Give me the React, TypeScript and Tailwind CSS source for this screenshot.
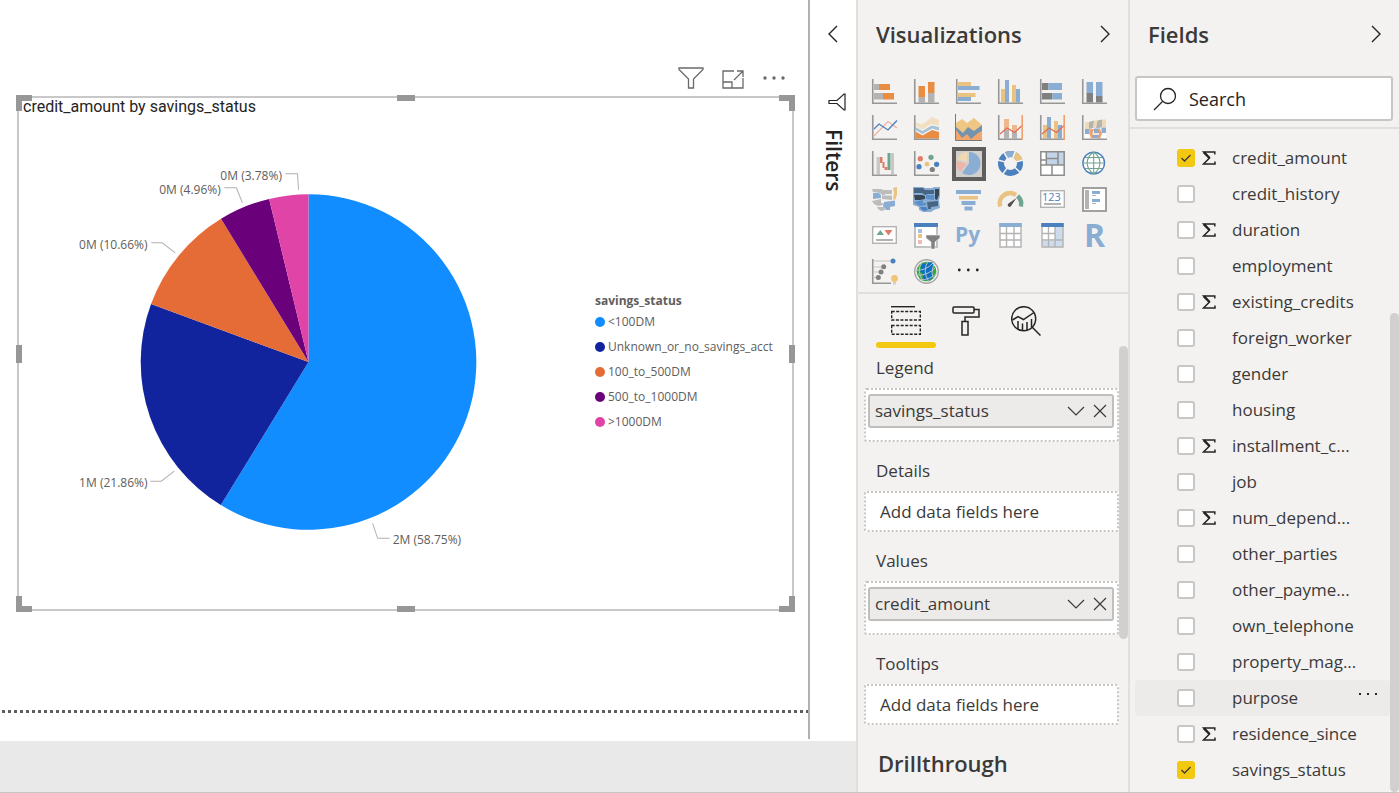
import { useState } from "react";
import type { ReactNode } from "react";
import clsx from "clsx";

const slices = [
  { name: "<100DM", value: 58.75, color: "#118dff", label: "2M (58.75%)", x: 393, y: 544, line: "M373 523L378 538H390" },
  { name: "Unknown_or_no_savings_acct", value: 21.86, color: "#12239e", label: "1M (21.86%)", x: 80, y: 487, line: "M151 481H162L175 471" },
  { name: "100_to_500DM", value: 10.66, color: "#e66c37", label: "0M (10.66%)", x: 80, y: 249, line: "M152 243H163L176 253" },
  { name: "500_to_1000DM", value: 4.96, color: "#6b007b", label: "0M (4.96%)", x: 160, y: 194, line: "M225 188H237L243 203" },
  { name: ">1000DM", value: 3.78, color: "#e044a7", label: "0M (3.78%)", x: 221, y: 180, line: "M286 174H298L299 190" },
];

function slicePath(cx: number, cy: number, r: number, start: number, end: number) {
  const point = (share: number) => {
    const a = (share / 100) * Math.PI * 2 - Math.PI / 2;
    return `${cx + r * Math.cos(a)} ${cy + r * Math.sin(a)}`;
  };
  return `M${cx} ${cy}L${point(start)}A${r} ${r} 0 ${end - start > 50 ? 1 : 0} 1 ${point(end)}Z`;
}

function Pie() {
  let sum = 0;
  return (
    <svg viewBox="20 116 560 492" className="min-w-0 flex-1 self-stretch" role="img" aria-label="Pie chart">
      {slices.map((s) => {
        const start = sum;
        sum += s.value;
        return (
          <g key={s.name}>
            <path d={slicePath(309, 362, 167.5, start, Math.min(sum, 100))} fill={s.color} />
            <path d={s.line} fill="none" stroke="#b3b0ad" />
            <text x={s.x} y={s.y} fontSize="12" fill="#605e5c">
              {s.label}
            </text>
          </g>
        );
      })}
    </svg>
  );
}

const BLUE = "#8aadd3";
const DEEP = "#4a80bd";
const ORANGE = "#e88d42";
const YELLOW = "#eac282";
const GREY = "#b3b3b3";
const DARK = "#808080";
const RED = "#dd7c68";
const GREEN = "#6fa58f";

const Axes = () => <path d="M.75 0V24.25H25" fill="none" stroke="#979797" strokeWidth="1.6" />;

// x, y, width, height, color
type Bar = [number, number, number, number, string];

const Bars = ({ items }: { items: Bar[] }) => (
  <>
    {items.map(([x, y, w, h, c]) => (
      <rect key={`${x}-${y}`} x={x} y={y} width={w} height={h} fill={c} />
    ))}
  </>
);

const visuals: { name: string; icon: ReactNode }[] = [
  {
    name: "Stacked bar chart",
    icon: <><Bars items={[[2, 5, 5, 6, GREY], [7, 5, 11, 6, ORANGE], [2, 14, 9, 6.5, GREY], [11, 14, 11, 6.5, ORANGE]]} /><Axes /></>,
  },
  {
    name: "Stacked column chart",
    icon: <><Bars items={[[4.5, 7, 6.5, 11, ORANGE], [4.5, 18, 6.5, 5.5, GREY], [14, 3, 6.5, 11, ORANGE], [14, 14, 6.5, 9.5, GREY]]} /><Axes /></>,
  },
  {
    name: "Clustered bar chart",
    icon: <><Bars items={[[2, 3, 13, 4, YELLOW], [2, 7, 21.5, 4, BLUE], [2, 14, 17.5, 4, YELLOW], [2, 18, 13, 4, BLUE]]} /><Axes /></>,
  },
  {
    name: "Clustered column chart",
    icon: <><Bars items={[[3, 10, 4, 13.5, YELLOW], [7, 1, 4, 22.5, BLUE], [14, 6, 4, 17.5, YELLOW], [18, 10, 4, 13.5, BLUE]]} /><Axes /></>,
  },
  {
    name: "100% stacked bar chart",
    icon: <><Bars items={[[2, 4, 6.5, 7, DARK], [8.5, 4, 13.5, 7, BLUE], [2, 14, 10.5, 6.5, DARK], [12.5, 14, 9.5, 6.5, BLUE]]} /><Axes /></>,
  },
  {
    name: "100% stacked column chart",
    icon: <><Bars items={[[4.5, 3, 6.5, 11, BLUE], [4.5, 14, 6.5, 9.5, DARK], [14, 3, 6.5, 14, BLUE], [14, 17, 6.5, 6.5, DARK]]} /><Axes /></>,
  },
  {
    name: "Line chart",
    icon: (
      <>
        <path d="M2 21L16 6.5L25 13" fill="none" stroke="#efb3a6" strokeWidth="1.3" />
        <path d="M2 14L7 9L16 15L25 5.5" fill="none" stroke={DEEP} strokeWidth="1.3" />
        <Axes />
      </>
    ),
  },
  {
    name: "Area chart",
    icon: (
      <>
        <path d="M1.5 7L8 9.5L18 2L25 5V10.5L17 9L8.5 14.5L1.5 10.5Z" fill="#f1dfc0" />
        <path d="M1.5 12L8.5 16L17.5 10.5L25 12V15.5L18 13.5L8.5 19L1.5 15Z" fill="#a8c3d6" />
        <path d="M1.5 16.5L8.5 20.5L18 15L25 17V23.5H1.5Z" fill={ORANGE} />
        <Axes />
      </>
    ),
  },
  {
    name: "Stacked area chart",
    icon: (
      <>
        <path d="M0 8L6 4L11 8L18 3L26 10V18H0Z" fill="#efc684" />
        <path d="M0 12L7 18L12 12L18 16L26 10V25H0Z" fill="#7593ad" />
        <path d="M0 15L6 23L11 19L15 24L22 18L26 16V25.5H0Z" fill="#f4a66a" />
        <path d="M-.5 -1V25.5H26" fill="none" stroke="#797979" />
      </>
    ),
  },
  {
    name: "Line and stacked column chart",
    icon: (
      <>
        <Bars items={[[6, 4, 5, 11, "#f0b68c"], [6, 15, 5, 8.5, GREY], [14, 10, 5, 7, "#f0b68c"], [14, 17, 5, 6.5, GREY]]} />
        <path d="M2 19L9 13L16.5 17.5L24 10.5" fill="none" stroke="#e2694f" strokeWidth="1.2" />
        <Axes />
        <path d="M24.2 0V25" stroke="#f0a06c" strokeWidth="1.6" />
      </>
    ),
  },
  {
    name: "Line and clustered column chart",
    icon: (
      <>
        <Bars items={[[3, 10, 4, 13.5, YELLOW], [7, 2, 4, 21.5, BLUE], [14, 6, 4, 17.5, YELLOW], [18, 10, 4, 13.5, BLUE]]} />
        <path d="M2 19L9 13L16.5 17.5L24 10.5" fill="none" stroke="#e2694f" strokeWidth="1.2" />
        <Axes />
        <path d="M24.2 0V25" stroke="#f0a06c" strokeWidth="1.6" />
      </>
    ),
  },
  {
    name: "Ribbon chart",
    icon: (
      <>
        <path d="M3 7H7V14H3ZM12 5.5H15.500L14 13H11ZM20 4.500H24V12H20Z" fill="#f0dab4" />
        <path d="M7 7L12 5.500L11 13L7 14ZM15.500 5.500L20 4.500V12L17 13H14Z" fill={GREY} />
        <path d="M3 14H7.500V19H3ZM12 13.500H18V18H12ZM19.500 12.500H24V18H19.500ZM9 20H18V23H9Z" fill={BLUE} />
        <path d="M3 19H7.500V23.500H3ZM19.500 18H24V23.500H19.500Z" fill="#fff" />
        <path d="M8 14H12L10.500 18L11 23H9L7.500 19ZM16 14H18L20 19L18 23.500H16L17 19Z" fill="#f0a06c" />
        <path d="M11 18H16.500L16 20H11Z" fill="#f6e4d2" />
        <Axes />
      </>
    ),
  },
  {
    name: "Waterfall chart",
    icon: (
      <>
        <Bars items={[[4.5, 6, 3.5, 17.5, "#c8c8c8"], [8, 6, 2.5, 6, RED], [10.5, 11, 2, 6, RED], [12.5, 16, 3, 3, RED], [15.5, 2, 3, 17, GREEN], [19, 2, 3, 21.5, "#c8c8c8"]]} />
        <Axes />
      </>
    ),
  },
  {
    name: "Scatter chart",
    icon: (
      <>
        <circle cx="6.3" cy="7.7" r="2.6" fill={RED} />
        <circle cx="17" cy="6.3" r="2.6" fill={GREEN} />
        <circle cx="13" cy="13.2" r="2.4" fill={YELLOW} />
        <circle cx="5" cy="15.7" r="2.6" fill={DEEP} />
        <circle cx="22.6" cy="13.3" r="2.6" fill={DEEP} />
        <circle cx="18.3" cy="18.5" r="2.6" fill={DARK} />
        <Axes />
      </>
    ),
  },
  {
    name: "Pie chart",
    icon: (
      <>
        <path d={slicePath(13, 12.5, 11.5, 0, 62)} fill={BLUE} />
        <path d={slicePath(11.5, 12.5, 11, 62, 79)} fill="#edb4a7" />
        <path d={slicePath(11.5, 11.5, 10.5, 79, 100)} fill="#f0d9b0" />
        <path d="M12 0V12L5.5 22M12 12L1 9" fill="none" stroke="#d2d2d2" strokeWidth="1.3" />
      </>
    ),
  },
  {
    name: "Donut chart",
    icon: (
      <g fill="none" strokeWidth="6">
        <circle cx="12.5" cy="12.5" r="9.5" stroke={DEEP} />
        <path d="M7.5 4.4A9.5 9.5 0 0 1 15.8 3.6" stroke={BLUE} />
        <path d="M15.8 3.6A9.5 9.5 0 0 1 21.7 10" stroke={YELLOW} />
        <path
          d="M12.5 12.5L5 0M12.5 12.5L17.5 0M12.5 12.5L25 9M12.5 12.5L23 22M12.5 12.5L4 24M12.5 12.5L0 9"
          stroke="#f3f2f1"
          strokeWidth="1.5"
        />
      </g>
    ),
  },
  {
    name: "Treemap",
    icon: (
      <>
        <rect x=".8" y=".8" width="23.4" height="23.4" fill="#fff" />
        <path d="M6.5 1H24V14H6.5Z" fill="#c3d4e8" />
        <path d="M.8 .8H24.2V24.2H.8ZM6.3 1V14M1 14H24M1 9H6M6 7.5H18M18 1V14M12 14V24" fill="none" stroke="#8c8c8c" strokeWidth="1.5" />
      </>
    ),
  },
  {
    name: "Map",
    icon: (
      <g fill="none" strokeWidth="1.1">
        <circle cx="11.7" cy="12" r="10.8" fill="#fff" stroke={DEEP} strokeWidth="1.4" />
        <path d="M11.7 1V23M1 12H22M3 6.5H20M3 17.5H20M11.7 1C3 7 3 17 11.7 23M11.7 1C20 7 20 17 11.7 23" stroke={GREEN} />
      </g>
    ),
  },
  {
    name: "Filled map",
    icon: (
      <>
        <path d="M0 2H9L11 3H20V7H14L11 8.500L8 6L1 5Z" fill="#bcbcbc" />
        <path d="M1 6H7L9 8V11L1 12Z" fill={BLUE} />
        <path d="M10 8.500H20V13L10 12ZM0 14L9 12V16H11V18L6 19L2 17Z" fill="#bcbcbc" />
        <path d="M21 1L25 0V8L23 13L21 12L22 6Z" fill={YELLOW} />
        <path d="M12 15L23 13.500V19L18 20V23H14L11 19Z" fill={BLUE} />
        <path d="M5 20H12L13 23L9 24L6 22Z" fill="#bcbcbc" />
      </>
    ),
  },
  {
    name: "Shape map",
    icon: (
      <>
        <path d="M-1 0H9L11 1H18L20 0H26V8L25 14L26 21L20 23L17 25H9L5 23V20L-1 18Z" fill={BLUE} />
        <path d="M0 1H9L11 3H20V7H14L11 8L8 6H0Z" fill="#466684" />
        <path d="M0 8H8L11 9V12L6 13H1ZM21 2H25V8L23 13L21 12Z" fill="#374654" />
        <path d="M12 8H20V13L12 12ZM0 15L9 13V16H12V18L6 19L2 17Z" fill="#5b8fc9" />
        <path d="M13 15L24 14V19L17 20V22H14Z" fill="#466684" />
        <path d="M6 20H12L14 23L10 24L7 22Z" fill="#4b80bc" />
      </>
    ),
  },
  {
    name: "Funnel",
    icon: <Bars items={[[0, 3, 25, 4, BLUE], [3, 9, 19, 3.5, YELLOW], [5.5, 14, 14, 4, BLUE], [8.5, 19.5, 8, 4, BLUE]]} />,
  },
  {
    name: "Gauge",
    icon: (
      <>
        <path d="M2.2 19.5A10.3 10.3 0 0 1 18 8" fill="none" stroke={YELLOW} strokeWidth="4.5" />
        <path d="M19.5 9A10.3 10.3 0 0 1 22.8 19.5" fill="none" stroke={GREEN} strokeWidth="4.5" />
        <path d="M18.500 11L13 19A1.800 1.800 0 1 1 10.500 16.500Z" fill="#505050" />
      </>
    ),
  },
  {
    name: "Card",
    icon: (
      <>
        <rect x=".7" y="3.7" width="23.6" height="16.6" fill="#fff" stroke={GREY} strokeWidth="1.4" />
        <text x="2" y="14" fontSize="11" fill={DEEP}>123</text>
        <path d="M4 17H21" stroke={DARK} strokeWidth="1.2" />
      </>
    ),
  },
  {
    name: "Multi-row card",
    icon: (
      <>
        <rect x="1" y="1" width="23" height="23" fill="#fff" stroke="#979797" strokeWidth="1.8" />
        <Bars items={[[3, 3, 4, 19, GREY], [10, 4, 8, 3, BLUE], [10, 8, 4, 1, GREY], [10, 12, 8, 3, BLUE], [10, 16, 4, 1, GREY]]} />
      </>
    ),
  },
  {
    name: "KPI",
    icon: (
      <>
        <rect x=".7" y="3.7" width="23.6" height="16.6" fill="#fff" stroke={GREY} strokeWidth="1.4" />
        <path d="M4.5 12L8.3 7L12 12Z" fill={GREEN} />
        <path d="M12.5 7H20.5L16.5 12.5Z" fill={RED} />
        <path d="M4 17H21" stroke={DARK} strokeWidth="1.2" />
      </>
    ),
  },
  {
    name: "Slicer",
    icon: (
      <>
        <path d="M1 1H23V24H1Z" fill="#fff" stroke={GREY} strokeWidth="1.6" />
        <Bars items={[[0, 0, 24, 4, DEEP], [4, 6, 4, 4, "#a9bfdb"], [4, 11, 4, 4, YELLOW], [4, 17, 4, 4, "#edbdb1"]]} />
        <path d="M12 12H26V15L21 19V26H17V19L12 15Z" fill={DARK} stroke="#f3f2f1" strokeWidth=".6" />
      </>
    ),
  },
  {
    name: "Python visual",
    icon: <text x="-1" y="19" fontSize="21" fontWeight="700" fill={BLUE}>Py</text>,
  },
  {
    name: "Table",
    icon: (
      <>
        <path d="M2 1H23V24H2Z" fill="#fff" />
        <path d="M2 1H23V24H2ZM8.5 4V24M16 4V24M2 10.5H23M2 17H23" fill="none" stroke={GREY} strokeWidth="1.4" />
        <rect x="1.3" width="22.4" height="4" fill={BLUE} />
      </>
    ),
  },
  {
    name: "Matrix",
    icon: (
      <>
        <path d="M2 1H23V24H2Z" fill="#fff" />
        <path d="M15 4H23V24H2V18H15Z" fill="#cddcec" />
        <path d="M2 1H23V24H2ZM8.5 4V24M15 4V24M2 10.5H15M2 17H23" fill="none" stroke={GREY} strokeWidth="1.4" />
        <rect x="1.3" width="22.4" height="4" fill={DEEP} />
      </>
    ),
  },
  {
    name: "R script visual",
    icon: <text x="2" y="24" fontSize="32" fontWeight="700" fill={BLUE}>R</text>,
  },
  {
    name: "Key influencers",
    icon: (
      <>
        <path d="M2 2H20M2 8H11M2 13H8M2 18.5H6" stroke="#c4c4c4" />
        <circle cx="21" cy="2" r="2.5" fill={DEEP} />
        <circle cx="11.7" cy="7.7" r="2.5" fill={DARK} />
        <circle cx="9" cy="13" r="2.5" fill={DARK} />
        <circle cx="6.3" cy="18.5" r="2.5" fill={DARK} />
        <path d="M.75 0V24.25H19" fill="none" stroke="#979797" strokeWidth="1.6" />
        <circle cx="22.5" cy="19.5" r="3.4" fill="#efc574" />
        <path d="M21 23H24V25.5H21Z" fill="#d4d0c8" />
      </>
    ),
  },
  {
    name: "ArcGIS map",
    icon: (
      <g fill="none" strokeWidth="1">
        <circle cx="12.5" cy="12.5" r="11.8" fill="#f3f2f1" stroke="#a5a5a5" strokeWidth="1.4" />
        <circle cx="12.5" cy="12.5" r="9.8" fill="#35a647" />
        <path d="M8 5L18 3L20 7L18 13L20 18L15 21L8 21L10 16L6 12Z" fill="#0b6fc4" />
        <path d="M2 11Q12 12 19 4M2 16Q14 17 22 8M5 21Q17 21 24 13M8 3Q2 12 9 22M14 2Q8 12 15 23M20 5Q16 14 20 20" stroke="#b9c4c4" />
      </g>
    ),
  },
  {
    name: "More visuals",
    icon: (
      <g fill="#252423">
        <circle cx="3.3" cy="11" r="1.4" />
        <circle cx="12.3" cy="11" r="1.4" />
        <circle cx="21.3" cy="11" r="1.4" />
      </g>
    ),
  },
];

type Field = { name: string; sum?: boolean; checked?: boolean };

const fields: Field[] = [
  { name: "credit_amount", sum: true, checked: true },
  { name: "credit_history" },
  { name: "duration", sum: true },
  { name: "employment" },
  { name: "existing_credits", sum: true },
  { name: "foreign_worker" },
  { name: "gender" },
  { name: "housing" },
  { name: "installment_c...", sum: true },
  { name: "job" },
  { name: "num_depend...", sum: true },
  { name: "other_parties" },
  { name: "other_payme..." },
  { name: "own_telephone" },
  { name: "property_mag..." },
  { name: "purpose" },
  { name: "residence_since", sum: true },
  { name: "savings_status", checked: true },
];

const wells = [
  { title: "Legend", field: "savings_status" },
  { title: "Details" },
  { title: "Values", field: "credit_amount" },
  { title: "Tooltips" },
];

function Chevron({ left }: { left?: boolean }) {
  return (
    <svg viewBox="0 0 10 18" className="h-[18px] w-[10px]" fill="none" stroke="#252423" strokeWidth="1.4">
      <path d={left ? "M9 1L1 9L9 17" : "M1 1L9 9L1 17"} />
    </svg>
  );
}

function Dots() {
  return (
    <svg viewBox="0 0 24 6" className="h-[6px] w-6" fill="currentColor">
      <circle cx="3" cy="3" r="1.7" />
      <circle cx="12" cy="3" r="1.7" />
      <circle cx="21" cy="3" r="1.7" />
    </svg>
  );
}

const HANDLES = [
  "-left-[3px] -top-[3px] size-4 border-l-[6px] border-t-[6px]",
  "-right-[3px] -top-[3px] size-4 border-r-[6px] border-t-[6px]",
  "-left-[3px] -bottom-[3px] size-4 border-l-[6px] border-b-[6px]",
  "-right-[3px] -bottom-[3px] size-4 border-r-[6px] border-b-[6px]",
  "left-1/2 -top-[3px] h-[6px] w-[18px] -translate-x-1/2 bg-[#979797]",
  "left-1/2 -bottom-[3px] h-[6px] w-[18px] -translate-x-1/2 bg-[#979797]",
  "top-1/2 -left-[3px] h-[18px] w-[6px] -translate-y-1/2 bg-[#979797]",
  "top-1/2 -right-[3px] h-[18px] w-[6px] -translate-y-1/2 bg-[#979797]",
];

function Canvas() {
  return (
    <main className="flex min-w-0 flex-1 flex-col border-r-2 border-[#b3b0ad]">
      <div className="flex items-center justify-end gap-[18px] pt-[66px] pr-[22px] pb-[6px] text-[#6b6967]">
        <button aria-label="Filters on this visual">
          <svg viewBox="0 0 26 24" className="h-6 w-[26px]" fill="none" stroke="currentColor" strokeWidth="1.3">
            <path d="M1 2H25V3.5L15.5 13V22H10.5V13L1 3.5Z" />
          </svg>
        </button>
        <button aria-label="Focus mode">
          <svg viewBox="0 0 22 24" className="h-6 w-[22px]" fill="none" stroke="currentColor" strokeWidth="1.3">
            <path d="M12 5H1V22H21V12M1 16H10V22M12 14L21 5M15 5H21V11" />
          </svg>
        </button>
        <button aria-label="More options">
          <Dots />
        </button>
      </div>
      <section className="relative mr-[14px] ml-[17px] flex min-h-0 flex-1 flex-col border-2 border-[#c8c8c8]">
        <h3 className="pl-1 font-[Roboto,sans-serif] text-[16px] leading-[17px] text-[#252423]">
          credit_amount by savings_status
        </h3>
        <div className="flex min-h-0 flex-1">
          <Pie />
          <div className="w-[212px] shrink-0 pt-[178px] pl-[15px] text-[12px] text-[#605e5c]">
            <h4 className="leading-4 font-bold">savings_status</h4>
            <ul>
              {slices.map((s) => (
                <li key={s.name} className="flex h-[25px] items-center gap-[3px] leading-5">
                  <svg viewBox="0 0 10 10" className="size-[10px] shrink-0">
                    <circle cx="5" cy="5" r="5" fill={s.color} />
                  </svg>
                  <span className="whitespace-nowrap">{s.name}</span>
                </li>
              ))}
            </ul>
          </div>
        </div>
        {HANDLES.map((h) => (
          <span key={h} className={clsx("absolute border-[#979797]", h)} />
        ))}
      </section>
      <div className="mt-[99px] mb-[26px] ml-[2px] h-[3px] bg-[repeating-linear-gradient(90deg,#605e5c_0_3px,transparent_3px_6px)]" />
    </main>
  );
}

function FiltersStrip() {
  return (
    <aside className="flex w-[46px] flex-col items-start pt-[25px] pl-[10px]">
      <button aria-label="Expand filters" className="pl-2">
        <Chevron left />
      </button>
      <svg viewBox="0 0 18 18" className="mt-[50px] ml-2 size-[18px]" fill="none" stroke="#252423" strokeWidth="1.2">
        <path d="M17 1V17H16L9 10.5H1V7.5H9L16 1Z" />
      </svg>
      <h2 className="mt-[18px] text-[21px] leading-[28px] font-semibold text-[#252423] [writing-mode:vertical-rl]">
        Filters
      </h2>
    </aside>
  );
}

function PaneHeader({ title }: { title: string }) {
  return (
    <header className="flex h-[72px] shrink-0 items-center justify-between px-[18px] pb-1">
      <h2 className="text-[22px] leading-7 font-semibold">{title}</h2>
      <button aria-label={`Collapse ${title}`}>
        <Chevron />
      </button>
    </header>
  );
}

function Visualizations() {
  const [selected, setSelected] = useState("Pie chart");

  return (
    <aside className="flex w-[272px] shrink-0 flex-col overflow-hidden border-l-2 border-[#e1dfdd] bg-[#f3f2f1] text-[#3b3a39]">
      <PaneHeader title="Visualizations" />
      <div className="grid shrink-0 grid-cols-[repeat(6,34px)] gap-x-2 gap-y-[2px] border-b-2 border-[#e1dfdd] py-[3px] pl-[10px]">
        {visuals.map((v) => (
          <button
            key={v.name}
            aria-label={v.name}
            onClick={() => setSelected(v.name)}
            className={clsx(
              "flex size-[34px] items-center justify-center",
              selected === v.name && "border-4 border-[#605e5c] bg-[#d2d0ce]"
            )}
          >
            <svg viewBox="0 0 26 26" className="size-[26px] shrink-0 overflow-visible">
              {v.icon}
            </svg>
          </button>
        ))}
      </div>
      <div className="flex min-h-0 flex-1">
        <div className="min-w-0 flex-1 pl-[6px]">
          <div className="flex h-[54px] pl-3">
            <button aria-label="Fields" className="flex w-[60px] flex-col items-center justify-end gap-[6px]">
              <svg viewBox="0 0 30 30" className="size-[30px]" fill="none" stroke="#252423" strokeWidth="1.4">
                <path d="M0 .7H24" />
                <path d="M.7 5.5H29.3V14H.7ZM.7 19.5H29.3V28.3H.7Z" strokeDasharray="3 1.5" />
              </svg>
              <span className="h-[6px] w-full rounded-full bg-[#f2c811]" />
            </button>
            <button aria-label="Format" className="flex w-[60px] justify-center pt-3">
              <svg viewBox="0 0 28 30" className="h-[30px] w-7" fill="none" stroke="#252423" strokeWidth="1.5">
                <rect x="1" y="1" width="21" height="6" rx="1" />
                <path d="M22 3.5H27V11H13V15.5" />
                <rect x="10" y="15.5" width="6" height="13.5" />
              </svg>
            </button>
            <button aria-label="Analytics" className="flex w-[60px] justify-center pt-3">
              <svg viewBox="0 0 30 30" className="size-[30px]" fill="none" stroke="#252423" strokeWidth="1.5">
                <circle cx="12.7" cy="12.7" r="12" />
                <path d="M21 21L29.5 29.5M1.5 14L7 10.5L12.5 13.5L23 6.5M7 15V23M11.5 17.5V24.5M16 16V24M20.5 13V21" />
              </svg>
            </button>
          </div>
          <div className="flex flex-col gap-[9px]">
            {wells.map((w) => (
              <section key={w.title}>
                <h3 className="flex h-10 items-center pl-3 text-[17px] leading-6">{w.title}</h3>
                {w.field ? (
                  <div className="h-[54px] rounded-[3px] border-2 border-dotted border-[#c8c6c4] bg-white pt-1 pr-[3px] pl-[2px]">
                    <div className="flex h-[34px] items-center rounded-[3px] border-2 border-[#c0bebc] bg-[#edebe9] px-[5px]">
                      <span className="flex-1 text-[17px] leading-6">{w.field}</span>
                      <button aria-label={`${w.field} options`}>
                        <svg viewBox="0 0 18 14" className="h-[14px] w-[18px]" fill="none" stroke="#3b3a39" strokeWidth="1.2">
                          <path d="M1 3L9 11L17 3" />
                        </svg>
                      </button>
                      <button aria-label={`Remove ${w.field}`} className="ml-2">
                        <svg viewBox="0 0 14 14" className="size-[14px]" fill="none" stroke="#3b3a39" strokeWidth="1.2">
                          <path d="M1 1L13 13M13 1L1 13" />
                        </svg>
                      </button>
                    </div>
                  </div>
                ) : (
                  <div className="flex h-[41px] items-center rounded-[3px] border-2 border-dotted border-[#c8c6c4] bg-white pl-[14px] text-[17px] leading-6">
                    Add data fields here
                  </div>
                )}
              </section>
            ))}
          </div>
          <h2 className="mt-6 pl-[14px] text-[22px] leading-7 font-semibold">Drillthrough</h2>
        </div>
        <div className="w-[9px] shrink-0 pt-[52px]">
          <div className="h-[293px] rounded-full bg-[#d2d0ce]" />
        </div>
      </div>
    </aside>
  );
}

function FieldRow({ field }: { field: Field }) {
  const hovered = field.name === "purpose";

  return (
    <li className={clsx("flex h-9 items-center rounded-[4px] pl-[42px]", hovered && "bg-[#edebe9]")}>
      <label className="flex flex-1 items-center">
        <span className="relative flex size-[18px]">
          <input
            type="checkbox"
            defaultChecked={field.checked}
            className="peer size-[18px] appearance-none rounded-[3px] border-2 border-[#c8c6c4] bg-white checked:border-[#f2c811] checked:bg-[#f2c811]"
          />
          <svg
            viewBox="0 0 18 18"
            className="pointer-events-none absolute inset-0 hidden peer-checked:block"
            fill="none"
            stroke="#3b3a39"
            strokeWidth="1.3"
          >
            <path d="M4.5 9L7.5 12L13.5 6" />
          </svg>
        </span>
        <span className="flex w-[37px] pl-[7px]">
          {field.sum && (
            <svg viewBox="0 0 14 14" className="size-[14px]" fill="none" stroke="#252423">
              <path d="M12.8 3.5V1H1.5L7.5 7L1.5 13H13V10.5" strokeWidth="1.5" />
              <path d="M2 1.3L7.5 7" strokeWidth="2.4" />
            </svg>
          )}
        </span>
        <span className="text-[17px] leading-6">{field.name}</span>
      </label>
      {hovered && (
        <button aria-label="More options" className="mr-3 flex h-5 items-start">
          <svg viewBox="0 0 20 12" className="h-3 w-5" fill="#252423">
            <path d="M1 5H3V7H1ZM9 5H11V7H9ZM17 5H19V7H17Z" />
          </svg>
        </button>
      )}
    </li>
  );
}

function Fields() {
  return (
    <aside className="flex w-[271px] shrink-0 flex-col overflow-hidden border-l-2 border-[#e1dfdd] bg-[#f3f2f1] text-[#3b3a39]">
      <PaneHeader title="Fields" />
      <div className="border-b-2 border-[#e1dfdd] pt-1 pr-[6px] pb-[6px] pl-[5px]">
        <label className="flex h-[45px] items-center gap-3 rounded-[3px] border-2 border-[#c8c6c4] bg-white pl-4">
          <svg viewBox="0 0 24 24" className="size-6 shrink-0" fill="none" stroke="#252423" strokeWidth="1.3">
            <circle cx="15" cy="9" r="7.5" />
            <path d="M9.5 14.5L1 23" />
          </svg>
          <input
            type="text"
            aria-label="Search"
            placeholder="Search"
            className="w-full min-w-0 bg-transparent text-[18px] leading-6 outline-none placeholder:text-[#252423]"
          />
        </label>
      </div>
      <div className="flex min-h-0 flex-1">
        <ul className="min-w-0 flex-1 overflow-hidden pt-[11px] pl-[5px]">
          {fields.map((f) => (
            <FieldRow key={f.name} field={f} />
          ))}
        </ul>
        <div className="flex w-[9px] shrink-0 flex-col pt-[184px]">
          <div className="flex-1 rounded-full bg-[#d2d0ce]" />
        </div>
      </div>
    </aside>
  );
}

export default function App() {
  return (
    <div className="flex h-screen overflow-hidden border-b border-[#c8c6c4] bg-white font-['Open_Sans',sans-serif]">
      <div className="flex min-w-0 flex-1 flex-col">
        <div className="flex min-h-0 flex-1 pb-[2px]">
          <Canvas />
          <FiltersStrip />
        </div>
        <footer className="h-[51px] bg-[#e9e9e9]" />
      </div>
      <Visualizations />
      <Fields />
    </div>
  );
}
